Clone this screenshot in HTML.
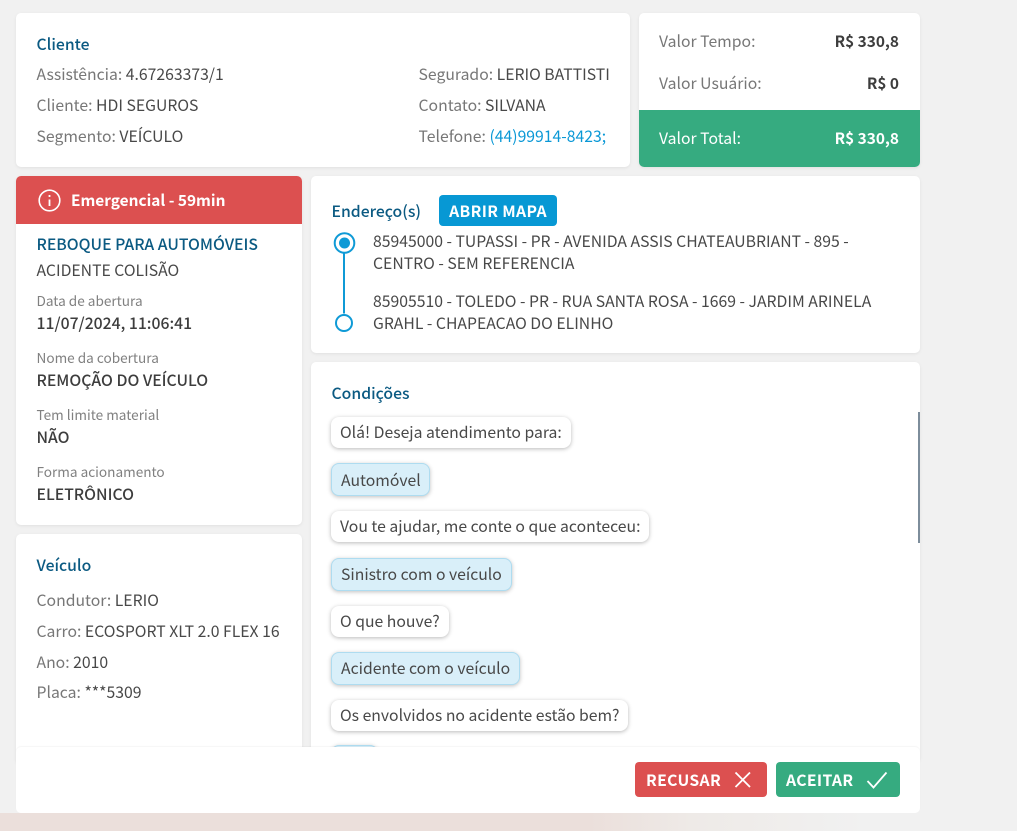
<!DOCTYPE html>
<html lang="pt-BR"><head><meta charset="utf-8"><title>Atendimento</title>
<style>
html,body{margin:0;padding:0;width:1017px;height:831px;overflow:hidden;background:#f1f1f1}
body{position:relative;font-family:"Noto Sans CJK SC","Liberation Sans",sans-serif;font-size:15.75px;color:#484848}
.c{position:absolute;background:#fff;border-radius:5px;box-shadow:0 1px 3px rgba(0,0,0,.07);overflow:hidden}
.t{position:absolute;white-space:nowrap;line-height:20px}
.h{color:#0b5a82;font-weight:500}
.g{color:#777}
.b{font-weight:700;color:#3d3d3d;font-size:15.4px}
.v{font-weight:500;color:#3d3d3d}
.s{font-size:13.6px;color:#808080;margin-top:-1px}
.m{position:absolute;height:31px;line-height:30px;border-radius:8px;background:#fff;box-shadow:0 1px 4px rgba(0,0,0,.28);padding:0 9px;white-space:nowrap;box-sizing:border-box}
.a{position:absolute;height:33px;line-height:31px;border-radius:8px;background:#d9eff9;border:1px solid #aedcf0;box-shadow:0 1px 4px rgba(0,0,0,.25);padding:0 9px;white-space:nowrap;box-sizing:border-box}
</style></head><body>
<div style="position:absolute;left:0;top:813px;width:1017px;height:18px;background:linear-gradient(90deg,#ebdfdb 0,#ebdfdb 58%,#eeeae7 68%,#f1f1f1 85%)"></div>

<div class="c" style="left:16px;top:13px;width:614px;height:154px"></div>
<div class="t h" style="left:36.5px;top:34px">Cliente</div>
<div class="t" style="left:36.5px;top:64px"><span class="g">Assistência:</span> 4.67263373/1</div>
<div class="t" style="left:36.5px;top:95px"><span class="g">Cliente:</span> HDI SEGUROS</div>
<div class="t" style="left:36.5px;top:126px"><span class="g">Segmento:</span> VEÍCULO</div>
<div class="t" style="left:418.5px;top:64px"><span class="g">Segurado:</span> LERIO BATTISTI</div>
<div class="t" style="left:418.5px;top:95px"><span class="g">Contato:</span> SILVANA</div>
<div class="t" style="left:418.5px;top:126px"><span class="g">Telefone:</span> <span style="color:#0a98d6">(44)99914-8423;</span></div>

<div class="c" style="left:639px;top:13px;width:281px;height:154px">
<div style="position:absolute;left:0;top:97px;width:281px;height:57px;background:#36ab80"></div></div>
<div class="t g" style="left:659px;top:31px">Valor Tempo:</div>
<div class="t b" style="right:118px;top:31px">R$ 330,8</div>
<div class="t g" style="left:659px;top:73px">Valor Usuário:</div>
<div class="t b" style="right:118px;top:73px">R$ 0</div>
<div class="t" style="left:659px;top:128px;color:#fff">Valor Total:</div>
<div class="t" style="right:118px;top:128px;color:#fff;font-weight:700;font-size:15.4px">R$ 330,8</div>

<div class="c" style="left:16px;top:176px;width:286px;height:349px">
<div style="position:absolute;left:0;top:0;width:286px;height:48px;background:#dc5050"></div></div>
<svg style="position:absolute;left:38px;top:189px" width="23" height="23" viewBox="0 0 23 23" fill="none" stroke="#fff"><circle cx="11.5" cy="11.5" r="10.3" stroke-width="1.6"/><path d="M11.5 10.5v6.5" stroke-width="1.8"/><path d="M11.5 6v2" stroke-width="1.8"/></svg>
<div class="t" style="left:71px;top:190px;color:#fff;font-weight:700;font-size:15.4px">Emergencial - 59min</div>
<div class="t h" style="left:36.5px;top:234px">REBOQUE PARA AUTOMÓVEIS</div>
<div class="t" style="left:36.5px;top:260px">ACIDENTE COLISÃO</div>
<div class="t s" style="left:36.5px;top:291px">Data de abertura</div>
<div class="t v" style="left:36.5px;top:313px">11/07/2024, 11:06:41</div>
<div class="t s" style="left:36.5px;top:348px">Nome da cobertura</div>
<div class="t v" style="left:36.5px;top:370px">REMOÇÃO DO VEÍCULO</div>
<div class="t s" style="left:36.5px;top:405px">Tem limite material</div>
<div class="t v" style="left:36.5px;top:427px">NÃO</div>
<div class="t s" style="left:36.5px;top:462px">Forma acionamento</div>
<div class="t v" style="left:36.5px;top:484px">ELETRÔNICO</div>

<div class="c" style="left:16px;top:534px;width:286px;height:230px"></div>
<div class="t h" style="left:36.5px;top:555px">Veículo</div>
<div class="t" style="left:36.5px;top:590px"><span class="g">Condutor:</span> LERIO</div>
<div class="t" style="left:36.5px;top:621px"><span class="g">Carro:</span> ECOSPORT XLT 2.0 FLEX 16</div>
<div class="t" style="left:36.5px;top:652px"><span class="g">Ano:</span> 2010</div>
<div class="t" style="left:36.5px;top:682px"><span class="g">Placa:</span> ***5309</div>

<div class="c" style="left:311px;top:176px;width:609px;height:177px"></div>
<div class="t h" style="left:331.5px;top:201px">Endereço(s)</div>
<div class="t" style="left:439px;top:195px;width:118px;height:31px;line-height:31px;background:#0798d4;border-radius:4px;color:#fff;font-weight:700;text-align:center;letter-spacing:.35px">ABRIR MAPA</div>
<svg style="position:absolute;left:332px;top:230px" width="25" height="105" viewBox="0 0 25 105" fill="none" stroke="#0f9ad6">
<path d="M12 22.5V83.5" stroke-width="2"/>
<circle cx="12.5" cy="13" r="9.8" stroke-width="2"/>
<circle cx="12.5" cy="13" r="5.5" fill="#0f9ad6" stroke="none"/>
<circle cx="12" cy="93" r="8" stroke-width="2"/></svg>
<div class="t" style="left:373px;top:231px">85945000 - TUPASSI - PR - AVENIDA ASSIS CHATEAUBRIANT - 895 -</div>
<div class="t" style="left:373px;top:253px">CENTRO - SEM REFERENCIA</div>
<div class="t" style="left:373px;top:291px">85905510 - TOLEDO - PR - RUA SANTA ROSA - 1669 - JARDIM ARINELA</div>
<div class="t" style="left:373px;top:313px">GRAHL - CHAPEACAO DO ELINHO</div>

<div class="c" style="left:311px;top:362px;width:609px;height:400px"></div>
<div class="t h" style="left:331.5px;top:383px">Condições</div>
<div style="position:absolute;left:918px;top:412px;width:2px;height:131px;background:#7d8d9b"></div>
<div class="m" style="left:331px;top:417px">Olá! Deseja atendimento para:</div>
<div class="a" style="left:331px;top:463px;width:99px">Automóvel</div>
<div class="m" style="left:331px;top:511px">Vou te ajudar, me conte o que aconteceu:</div>
<div class="a" style="left:331px;top:558px;line-height:29px">Sinistro com o veículo</div>
<div class="m" style="left:331px;top:606px">O que houve?</div>
<div class="a" style="left:331px;top:652px;line-height:29px">Acidente com o veículo</div>
<div class="m" style="left:331px;top:700px">Os envolvidos no acidente estão bem?</div>
<div class="a" style="left:331px;top:745px;width:47px"></div>

<div class="c" style="left:16px;top:747px;width:904px;height:66px;box-shadow:0 -1px 1px rgba(0,0,0,.04)"></div>
<div style="position:absolute;left:635px;top:762px;width:132px;height:35px;background:#dc5050;border-radius:4px"></div>
<div class="t" style="left:646px;top:770px;color:#fff;font-weight:700;letter-spacing:.33px">RECUSAR</div>
<svg style="position:absolute;left:733px;top:770px" width="20" height="20" viewBox="0 0 20 20" fill="none" stroke="#fff" stroke-width="1.8"><path d="M2.5 2.5L17 17M17 2.5L2.5 17"/></svg>
<div style="position:absolute;left:776px;top:762px;width:124px;height:35px;background:#36ab80;border-radius:4px"></div>
<div class="t" style="left:786px;top:770px;color:#fff;font-weight:700;letter-spacing:.33px">ACEITAR</div>
<svg style="position:absolute;left:865px;top:770px" width="24" height="20" viewBox="0 0 24 20" fill="none" stroke="#fff" stroke-width="1.8"><path d="M2.5 11L8.5 17.5L21.5 2.5"/></svg>
</body></html>
